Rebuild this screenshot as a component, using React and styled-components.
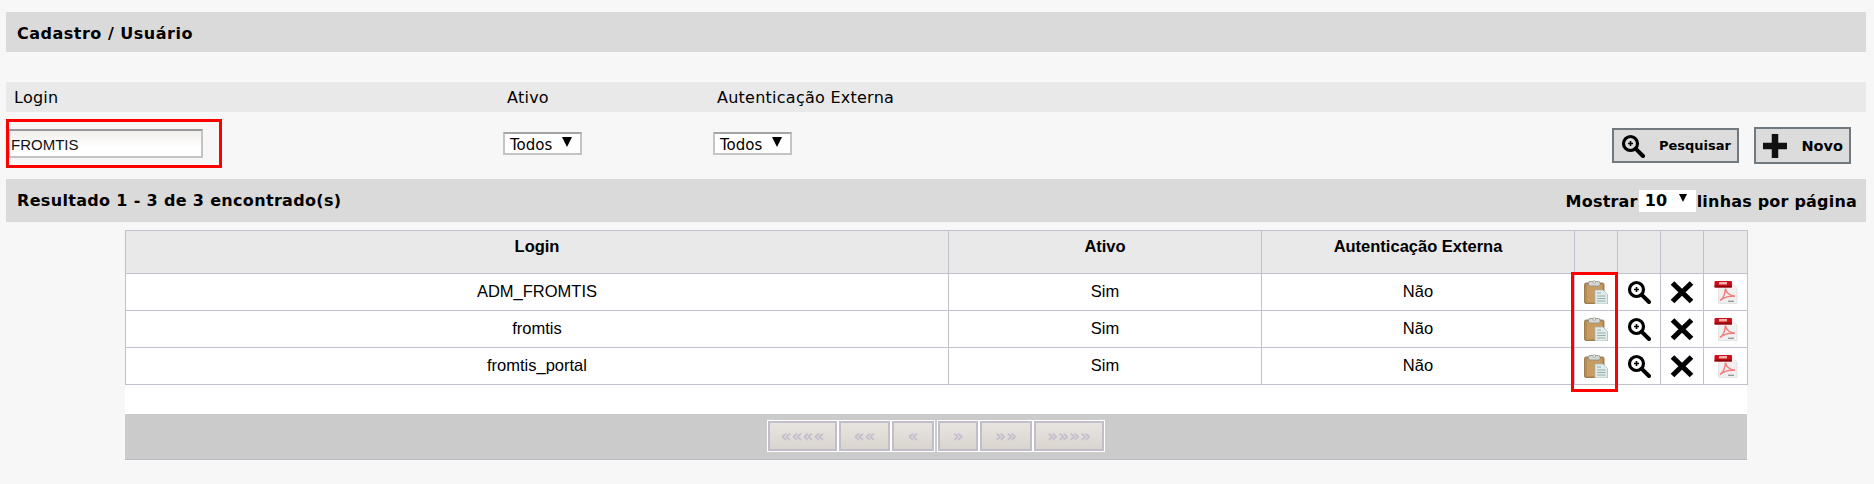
import React from "react";
import styled, { createGlobalStyle } from "styled-components";

const Global = createGlobalStyle`
  html, body { margin: 0; padding: 0; background: #f7f7f7; }
  body { font-family: "DejaVu Sans", Verdana, sans-serif; color: #000; }
  #root { height: 484px; overflow: hidden; }
`;

const Page = styled.div`
  padding: 12px 8px 0 6px;
  display: flex;
  flex-direction: column;
`;

const HeaderBar = styled.div`
  box-sizing: border-box;
  height: 40px;
  background: #dadada;
  display: flex;
  align-items: center;
  padding: 2px 0 0 11px;
  font-size: 16px;
  letter-spacing: 0.5px;
  font-weight: 700;
  margin-bottom: 30px;
`;

const LabelRow = styled.div`
  height: 30px;
  background: #e9e9e9;
  display: grid;
  grid-template-columns: 501px 210px 1fr;
  align-items: center;
  font-size: 16px;
  letter-spacing: 0.25px;
  span:first-child { padding-left: 8px; }
`;

const FilterRow = styled.div`
  height: 67px;
  position: relative;
  display: grid;
  grid-template-columns: 497px 210px 1fr auto;
  align-items: start;
`;

const TextInput = styled.div`
  box-sizing: border-box;
  margin: 17px 0 0 2px;
  padding: 2px 0 0 1px;
  width: 195px;
  height: 29px;
  border: 2px solid #c4c4c4;
  border-top-color: #999;
  background: linear-gradient(#f1efeb, #ffffff 65%);
  font: 15px/25px "Liberation Sans", Arial, sans-serif;
  color: #111;
  display: flex;
  align-items: center;
`;

const Select = styled.div`
  box-sizing: border-box;
  margin-top: 20px;
  width: 79px;
  height: 23px;
  border: 2px solid #c4c4c4;
  border-top-color: #a4a4a4;
  background: #fff;
  display: flex;
  align-items: center;
  justify-content: space-between;
  padding: 2px 8px 0 5px;
  font-size: 15px;
`;

const Caret = styled.span`
  width: 0;
  height: 0;
  margin-top: -5px;
  border-left: 5px solid transparent;
  border-right: 5px solid transparent;
  border-top: 10px solid #000;
`;

const Buttons = styled.div`
  display: flex;
  gap: 15px;
  align-items: flex-start;
  margin-top: 15px;
  padding-right: 15px;
`;

const Button = styled.div`
  box-sizing: border-box;
  width: ${(p) => p.$w}px;
  height: ${(p) => p.$h}px;
  margin-top: ${(p) => p.$top}px;
  border: 2px solid #707880;
  background: #dcdcdc;
  display: flex;
  align-items: center;
  justify-content: space-between;
  padding: 0 ${(p) => p.$pr}px 0 7px;
  font-size: ${(p) => p.$fs}px;
  font-weight: 700;
`;

const ResultBar = styled.div`
  height: 43px;
  background: #dadada;
  display: flex;
  align-items: center;
  justify-content: space-between;
  padding: 0 9px 0 11px;
  font-size: 16px;
  letter-spacing: 0.33px;
  font-weight: 700;
  margin-bottom: 8px;
`;

const PerPage = styled.div`
  display: flex;
  align-items: center;
  gap: 1px;
  padding-top: 1px;
  letter-spacing: 0.2px;
`;

const SmallSelect = styled.div`
  width: 57px;
  height: 22px;
  box-sizing: border-box;
  margin-top: -1px;
  background: #fff;
  display: flex;
  align-items: center;
  justify-content: space-between;
  padding: 0 9px 0 6px;
  font-size: 16px;
  font-weight: 700;
`;

const SmallCaret = styled(Caret)`
  border-left-width: 4px;
  border-right-width: 4px;
  border-top-width: 8px;
`;

const TableWrap = styled.div`
  position: relative;
  width: 1622px;
  margin-left: 119px;
  background: #fff;
`;

const Table = styled.table`
  width: 100%;
  table-layout: fixed;
  border-collapse: collapse;
  font-family: "Liberation Sans", Arial, sans-serif;
  font-size: 16.5px;
`;

const Th = styled.th`
  box-sizing: border-box;
  height: 43px;
  padding: 0 0 12px;
  background: #e9e9e9;
  border: 1px solid #c3c0cb;
  font-weight: 700;
  font-size: 16.5px;
`;

const Td = styled.td`
  box-sizing: border-box;
  height: 37px;
  padding: 0 0 2px;
  text-align: center;
  border: 1px solid #c3c0cb;
  background: #fff;
`;

const IconTd = styled(Td)`
  padding: 0;
  svg { display: block; margin: 0 auto; filter: blur(0.45px); }
`;

const Highlight = styled.div`
  position: absolute;
  box-sizing: border-box;
  border: 3px solid #f00;
  pointer-events: none;
`;

const ColumnMark = styled(Highlight)`
  left: 1446px;
  top: 42px;
  width: 47px;
  height: 120px;
`;

const LoginMark = styled(Highlight)`
  left: 0;
  top: 7px;
  width: 216px;
  height: 49px;
`;

const Spacer = styled.div`
  height: 29px;
`;

const PagerBar = styled.div`
  height: 46px;
  background: #cbcbcb;
  border-bottom: 1px solid #bbb8c2;
  box-sizing: border-box;
  display: flex;
  align-items: flex-start;
  padding: 6px 0 0 642px;
`;

const Pager = styled.div`
  display: flex;
`;

const PageBtn = styled.div`
  box-sizing: border-box;
  width: ${(p) => p.$w}px;
  height: 32px;
  margin-left: ${(p) => p.$ml || 0}px;
  border: 1px solid #fff;
  outline: 2px solid #c1bdc9;
  outline-offset: -3px;
  background: linear-gradient(#e9e6e2, #d8d3cd);
  color: #c4bccd;
  font-size: 17px;
  font-weight: 700;
  display: flex;
  align-items: center;
  justify-content: center;
`;

const Magnifier = ({ size = 24 }) => (
  <svg width={size} height={size} viewBox="0 0 24 24">
    <circle cx="9.5" cy="9.5" r="7" fill="none" stroke="#000" strokeWidth="3.2" />
    <path d="M14.8 14.8 L22 22" stroke="#000" strokeWidth="4" strokeLinecap="round" />
    <path d="M9.5 7v5M7 9.5h5" stroke="#000" strokeWidth="1.6" />
  </svg>
);

const Cross = () => (
  <svg width="24" height="24" viewBox="0 0 24 24">
    <path d="M2.5 3 L21.5 21.5 M21.5 3 L2.5 21.5" stroke="#000" strokeWidth="5.2" />
  </svg>
);

const Plus = () => (
  <svg width="24" height="24" viewBox="0 0 24 24">
    <path d="M12 0v24M0 12h24" stroke="#111" strokeWidth="6.5" />
  </svg>
);

const Clipboard = () => (
  <svg width="24" height="24" viewBox="0 0 24 24">
    <rect x="0.5" y="3" width="19.5" height="20.5" rx="1.5" fill="#b98c52" stroke="#8c6a3e" strokeWidth="0.8" />
    <path d="M3 5h15v17H3z" fill="#c79c62" />
    <rect x="4.5" y="1.5" width="11.5" height="4.5" rx="1.5" fill="#d6d6d2" stroke="#8d8d88" strokeWidth="0.8" />
    <circle cx="10.2" cy="2" r="1.4" fill="#f4f4f0" stroke="#888" strokeWidth="0.6" />
    <path d="M11 10h8l4.5 4.5V24H11z" fill="#dfecea" stroke="#a4b8b4" strokeWidth="0.7" />
    <path d="M13 13h4M13 16h8.5M13 18.5h8.5M13 21h8.5" stroke="#8fa6a2" strokeWidth="0.9" />
  </svg>
);

const Pdf = () => (
  <svg width="24" height="24" viewBox="0 0 24 24">
    <path d="M4.5 3h13l5.5 5v15.5H4.5z" fill="#f0f0f0" stroke="#dcdcdc" strokeWidth="0.7" />
    <rect x="0.5" y="1" width="17.5" height="6.5" rx="1" fill="#cc0f18" />
    <rect x="0.5" y="5.6" width="17.5" height="1.9" fill="#8e0a10" />
    <rect x="5" y="2" width="8" height="2.5" fill="#f3b0b0" />
    <path d="M6 20.5c2.5-1.5 5-6 5.5-12 .5 4 3.5 6.8 9.5 7.8-4.5-.5-10.5.4-15 4.2z" fill="none" stroke="#f27d7d" strokeWidth="1.5" />
    <path d="M14 21.3h6" stroke="#999" strokeWidth="1.4" />
  </svg>
);

const rows = ["ADM_FROMTIS", "fromtis", "fromtis_portal"];
const pages = [
  { w: 71, t: "««««" },
  { w: 53, t: "««" },
  { w: 44, t: "«" },
  { w: 42, t: "»", ml: 2 },
  { w: 54, t: "»»" },
  { w: 72, t: "»»»»" },
];

export default function App() {
  return (
    <>
      <Global />
      <Page>
        <HeaderBar>Cadastro / Usuário</HeaderBar>
        <LabelRow>
          <span>Login</span>
          <span>Ativo</span>
          <span>Autenticação Externa</span>
        </LabelRow>
        <FilterRow>
          <TextInput>FROMTIS</TextInput>
          <Select>Todos <Caret /></Select>
          <Select>Todos <Caret /></Select>
          <Buttons>
            <Button $w={127} $h={35} $top={1} $pr={6} $fs={13}><Magnifier />Pesquisar</Button>
            <Button $w={97} $h={37} $top={0} $pr={6} $fs={14.5}><Plus />Novo</Button>
          </Buttons>
          <LoginMark />
        </FilterRow>
        <ResultBar>
          <span>Resultado 1 - 3 de 3 encontrado(s)</span>
          <PerPage>
            Mostrar
            <SmallSelect>10 <SmallCaret /></SmallSelect>
            linhas por página
          </PerPage>
        </ResultBar>
        <TableWrap>
          <Table>
            <colgroup>
              <col style={{ width: 823 }} />
              <col style={{ width: 313 }} />
              <col style={{ width: 313 }} />
              <col style={{ width: 43 }} />
              <col style={{ width: 43 }} />
              <col style={{ width: 43 }} />
              <col style={{ width: 44 }} />
            </colgroup>
            <thead>
              <tr>
                <Th>Login</Th>
                <Th>Ativo</Th>
                <Th>Autenticação Externa</Th>
                <Th />
                <Th />
                <Th />
                <Th />
              </tr>
            </thead>
            <tbody>
              {rows.map((r) => (
                <tr key={r}>
                  <Td>{r}</Td>
                  <Td>Sim</Td>
                  <Td>Não</Td>
                  <IconTd><Clipboard /></IconTd>
                  <IconTd><Magnifier /></IconTd>
                  <IconTd><Cross /></IconTd>
                  <IconTd><Pdf /></IconTd>
                </tr>
              ))}
            </tbody>
          </Table>
          <Spacer />
          <PagerBar>
            <Pager>
              {pages.map((p, i) => (
                <PageBtn key={i} $w={p.w} $ml={p.ml}>{p.t}</PageBtn>
              ))}
            </Pager>
          </PagerBar>
          <ColumnMark />
        </TableWrap>
      </Page>
    </>
  );
}
